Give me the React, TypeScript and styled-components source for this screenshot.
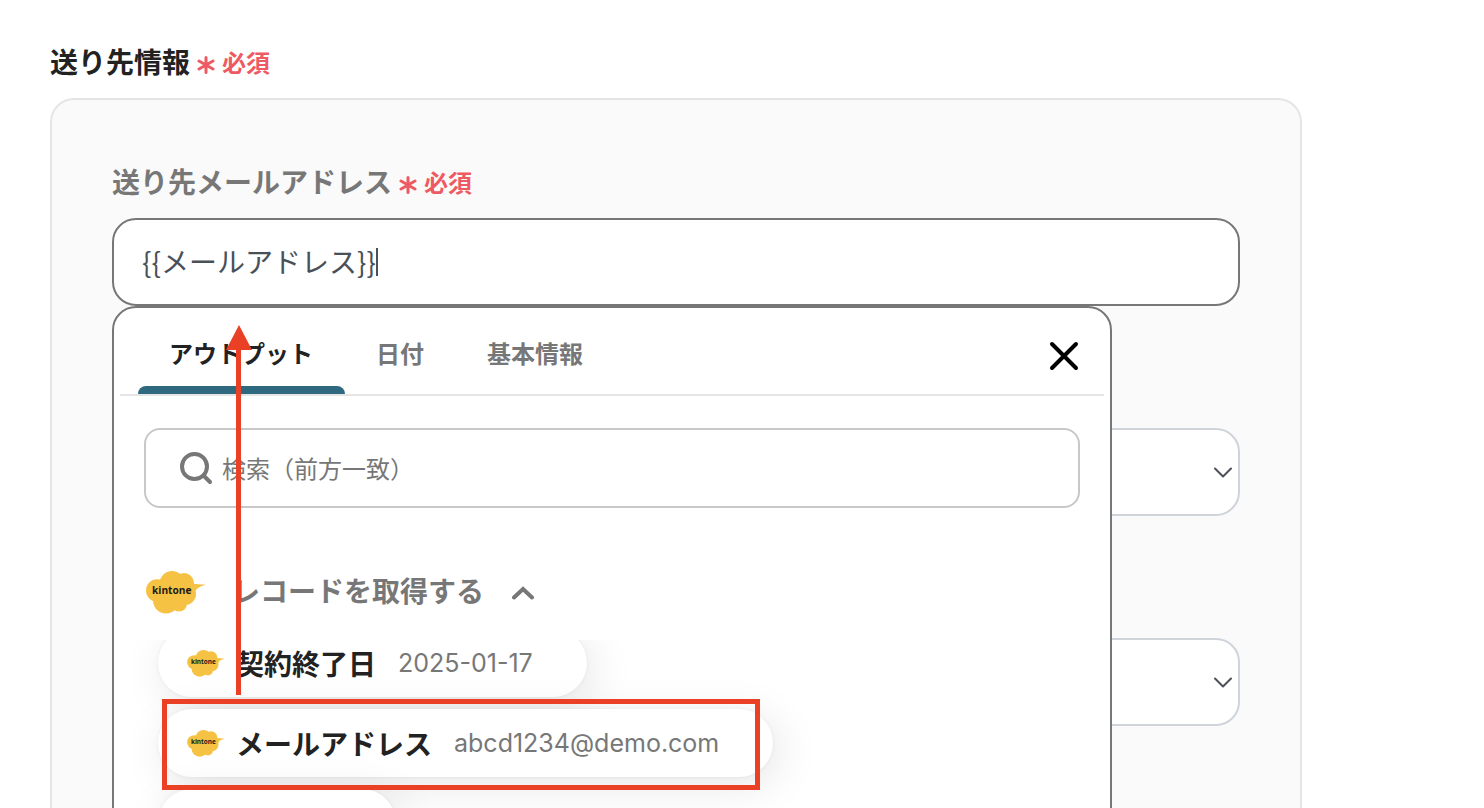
import React, { useState } from 'react';
import styled, { createGlobalStyle } from 'styled-components';

const GlobalStyle = createGlobalStyle`
  *, *::before, *::after { box-sizing: border-box; }
  body {
    margin: 0;
    background: #ffffff;
    color: #222222;
    font-family: "Noto Sans CJK JP", sans-serif;
  }
  button, input, select { font-family: inherit; }
`;

const Page = styled.main`
  height: 100vh;
  overflow: hidden;
  display: flex;
  flex-direction: column;
  padding: 40px 182px 0 50px;
`;

const TitleRow = styled.div`
  display: flex;
  align-items: center;
  gap: 5px;
  height: 44px;
  margin-bottom: 14px;
  padding-bottom: 2px;
`;

const Title = styled.h1`
  margin: 0;
  font-size: 28px;
  line-height: 42px;
  font-weight: 700;
`;

const FieldLabel = styled.label`
  font-size: 28px;
  line-height: 42px;
  font-weight: 700;
  color: #777777;
`;

const RequiredMark = styled.span`
  display: flex;
  align-items: center;
  gap: 7px;
  padding-top: 2px;
  color: #ee5a62;
  font-size: 24px;
  line-height: 40px;
  font-weight: 700;

  svg { margin-top: 6px; }
`;

const Panel = styled.section`
  flex: 1;
  padding: 60px;
  border: 2px solid #e5e5e5;
  border-bottom: 0;
  border-radius: 24px 24px 0 0;
  background: #fafafa;
`;

const InputArea = styled.div`
  position: relative;
`;

const TextInput = styled.input`
  display: block;
  width: 100%;
  height: 88px;
  padding: 0 28px 2px;
  border: 2px solid #777777;
  border-radius: 24px;
  outline: 0;
  background: #ffffff;
  color: #495057;
  font-size: 28px;
  caret-color: transparent;
`;

const Caret = styled.span`
  position: absolute;
  left: 264px;
  top: 30px;
  width: 2px;
  height: 28px;
  background: #495057;
`;

const SelectBox = styled.div`
  position: relative;
  margin-top: 122px;

  svg {
    position: absolute;
    right: 8px;
    top: 39px;
    pointer-events: none;
  }
`;

const Select = styled.select`
  display: block;
  width: 100%;
  height: 88px;
  padding: 0 48px 0 28px;
  appearance: none;
  border: 2px solid #ced4da;
  border-radius: 24px;
  background: #ffffff;
  font-size: 28px;
`;

const Menu = styled.div`
  position: absolute;
  z-index: 1;
  top: 100%;
  left: 0;
  right: 128px;
  height: 640px;
  border: 2px solid #777777;
  border-radius: 24px;
  background: #ffffff;
`;

const TabBar = styled.div`
  display: flex;
  justify-content: space-between;
  align-items: stretch;
  height: 88px;
  margin: 0 6px;
  padding: 0 24px 0 18px;
  border-bottom: 2px solid #e5e5e5;
`;

const TabList = styled.div`
  display: flex;
`;

const Tab = styled.button<{ $active: boolean }>`
  display: flex;
  flex-direction: column;
  justify-content: space-between;
  padding: 25px 0 0;
  border: 0;
  background: transparent;
  color: ${(p) => (p.$active ? '#222222' : '#777777')};
  font-size: 24px;
  line-height: 40px;
  font-weight: 700;

  span { padding: 0 32px 0 31px; }

  &::after {
    content: "";
    width: 100%;
    height: 8px;
    border-radius: 8px 8px 0 0;
    background: ${(p) => (p.$active ? '#2f6980' : 'transparent')};
  }
`;

const CloseButton = styled.button`
  display: flex;
  align-items: center;
  padding: 10px 0 0;
  border: 0;
  background: transparent;
  color: #000000;
`;

const SearchBox = styled.label`
  display: flex;
  align-items: center;
  gap: 8px;
  height: 80px;
  margin: 32px 30px 0;
  padding: 0 34px;
  border: 2px solid #c8c8c8;
  border-radius: 16px;
  color: #777777;
`;

const SearchInput = styled.input`
  flex: 1;
  min-width: 0;
  height: 40px;
  padding: 0 0 2px;
  border: 0;
  outline: 0;
  background: transparent;
  font-size: 24px;
  &::placeholder { color: #777777; opacity: 1; }
`;

const GroupHeader = styled.button`
  display: flex;
  align-items: center;
  height: 60px;
  margin: 54px 32px 0;
  padding: 0;
  border: 0;
  background: transparent;
  color: #777777;
  font-size: 28px;
  line-height: 44px;
  font-weight: 700;

  span { margin: 0 26px 4px; }
`;

const ChipList = styled.ul`
  display: flex;
  flex-direction: column;
  justify-content: flex-end;
  align-items: flex-start;
  gap: 12px;
  height: 217px;
  margin: 18px 0 0;
  padding: 0 0 0 44px;
  overflow: hidden;
  list-style: none;
`;

const Chip = styled.button`
  display: flex;
  align-items: center;
  min-width: 238px;
  height: 68px;
  padding: 0 54px 0 29px;
  border: 0;
  border-radius: 34px;
  background: #ffffff;
  box-shadow: 0 0 4px rgba(0, 0, 0, 0.06), 6px 8px 44px rgba(0, 0, 0, 0.1);
  color: #222222;
`;

const ChipName = styled.span`
  margin: 0 22px 0 11px;
  padding-bottom: 1px;
  font-size: 28px;
  line-height: 44px;
  font-weight: 700;
`;

const ChipValue = styled.span`
  color: #777777;
  font-family: Inter, "Noto Sans CJK JP", sans-serif;
  font-size: 25px;
  line-height: 40px;
`;

const Highlight = styled.div`
  position: absolute;
  z-index: 2;
  left: 50px;
  top: 481px;
  width: 598px;
  height: 91px;
  border: 5px solid #ea4025;
  pointer-events: none;
`;

const Arrow = styled.svg`
  position: absolute;
  z-index: 2;
  left: 114px;
  top: 107px;
  pointer-events: none;
`;

function Required() {
  return (
    <RequiredMark>
      <svg width="20" height="18" viewBox="0 0 20 18" fill="none" stroke="currentColor" strokeWidth="3" strokeLinecap="round" aria-hidden="true">
        <path d="M11 1.500v15M4 5l14 8M18 5L4 13" />
      </svg>
      必須
    </RequiredMark>
  );
}

function KintoneLogo({ width }: { width: number }) {
  return (
    <svg width={width} height={Math.round(width * 0.72)} viewBox="0 0 60 43" role="img" aria-label="kintone">
      <g fill="#f6c243">
        <circle cx="11.2" cy="19.500" r="11.2" />
        <circle cx="26" cy="12.500" r="12.500" />
        <circle cx="38" cy="12" r="10" />
        <circle cx="39" cy="23" r="11" />
        <circle cx="33" cy="32.500" r="8" />
        <circle cx="20" cy="29.500" r="13" />
        <path d="M44 12.400Q53 13.200 60 13.800Q51 15.600 48.500 21.500L40 22Z" />
      </g>
      <text x="6" y="23" fontFamily="Open Sans, sans-serif" fontSize="10.200" fontWeight="700" fill="#1b1a12">kintone</text>
    </svg>
  );
}

function SelectField({ label }: { label: string }) {
  return (
    <SelectBox>
      <Select aria-label={label} />
      <svg width="18" height="11" viewBox="0 0 18 11" fill="none" stroke="#4d5157" strokeWidth="2" strokeLinecap="round" strokeLinejoin="round" aria-hidden="true">
        <path d="M1 1.500l8 8 8-8" />
      </svg>
    </SelectBox>
  );
}

const tabs = ['アウトプット', '日付', '基本情報'];
const records = [
  { name: '契約終了日', value: '2025-01-17' },
  { name: 'メールアドレス', value: 'abcd1234@demo.com' },
  { name: '', value: '' },
];

export default function App() {
  const [address, setAddress] = useState('{{メールアドレス}}');
  const [activeTab, setActiveTab] = useState(tabs[0]);

  return (
    <>
      <GlobalStyle />
      <Page>
        <TitleRow>
          <Title>送り先情報</Title>
          <Required />
        </TitleRow>
        <Panel>
          <TitleRow>
            <FieldLabel htmlFor="address">送り先メールアドレス</FieldLabel>
            <Required />
          </TitleRow>
          <InputArea>
            <TextInput id="address" value={address} onChange={(e) => setAddress(e.target.value)} />
            <Caret />
            <Menu>
              <TabBar>
                <TabList role="tablist">
                  {tabs.map((tab) => (
                    <Tab key={tab} role="tab" aria-selected={tab === activeTab} $active={tab === activeTab} onClick={() => setActiveTab(tab)}>
                      <span>{tab}</span>
                    </Tab>
                  ))}
                </TabList>
                <CloseButton aria-label="閉じる">
                  <svg width="32" height="32" viewBox="0 0 32 32" fill="none" stroke="currentColor" strokeWidth="4" strokeLinecap="round">
                    <path d="M4 4l24 24M28 4L4 28" />
                  </svg>
                </CloseButton>
              </TabBar>
              <SearchBox>
                <svg width="34" height="34" viewBox="0 0 34 34" fill="none" stroke="currentColor" strokeWidth="4" strokeLinecap="round" aria-hidden="true">
                  <circle cx="14.500" cy="15.500" r="12.500" />
                  <path d="M23.500 24.500l6.500 6.500" />
                </svg>
                <SearchInput type="text" aria-label="検索" placeholder="検索（前方一致）" />
              </SearchBox>
              <GroupHeader aria-expanded="true">
                <KintoneLogo width={60} />
                <span>レコードを取得する</span>
                <svg width="24" height="16" viewBox="0 0 24 16" fill="none" stroke="currentColor" strokeWidth="4" strokeLinecap="round" aria-hidden="true">
                  <path d="M4 13.500l9-8.500 9 8.500" />
                </svg>
              </GroupHeader>
              <ChipList>
                {records.map((record) => (
                  <li key={record.name}>
                    <Chip>
                      {record.name && <KintoneLogo width={38} />}
                      <ChipName>{record.name}</ChipName>
                      <ChipValue>{record.value}</ChipValue>
                    </Chip>
                  </li>
                ))}
              </ChipList>
            </Menu>
            <Arrow width="26" height="370" viewBox="0 0 26 370" fill="#ea4025" aria-hidden="true">
              <path d="M13 0L26 25H15V370H10V25H0Z" />
            </Arrow>
            <Highlight />
          </InputArea>
          <SelectField label="送り先名" />
          <SelectField label="送り先担当者" />
        </Panel>
      </Page>
    </>
  );
}
